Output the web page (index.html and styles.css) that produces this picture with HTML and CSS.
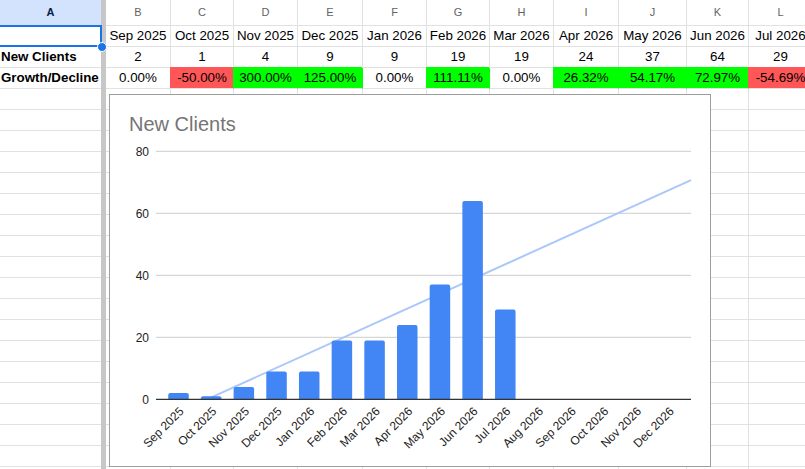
FILE: index.html
```html
<!DOCTYPE html>
<html>
<head>
<meta charset="utf-8">
<link rel="stylesheet" href="styles.css">
</head>
<body>
<div class="sheet">
  <div class="freeze"></div>

  <div class="c h sel">A</div><div class="c h">B</div><div class="c h">C</div><div class="c h">D</div><div class="c h">E</div><div class="c h">F</div><div class="c h">G</div><div class="c h">H</div><div class="c h">I</div><div class="c h">J</div><div class="c h">K</div><div class="c h">L</div>

  <div class="c a"></div><div class="c">Sep 2025</div><div class="c">Oct 2025</div><div class="c">Nov 2025</div><div class="c">Dec 2025</div><div class="c">Jan 2026</div><div class="c">Feb 2026</div><div class="c">Mar 2026</div><div class="c">Apr 2026</div><div class="c">May 2026</div><div class="c">Jun 2026</div><div class="c">Jul 2026</div>

  <div class="c a">New Clients</div><div class="c">2</div><div class="c">1</div><div class="c">4</div><div class="c">9</div><div class="c">9</div><div class="c">19</div><div class="c">19</div><div class="c">24</div><div class="c">37</div><div class="c">64</div><div class="c">29</div>

  <div class="c a">Growth/Decline</div><div class="c">0.00%</div><div class="c neg">-50.00%</div><div class="c pos">300.00%</div><div class="c pos">125.00%</div><div class="c">0.00%</div><div class="c pos">111.11%</div><div class="c">0.00%</div><div class="c pos">26.32%</div><div class="c pos">54.17%</div><div class="c pos">72.97%</div><div class="c neg">-54.69%</div>

  <div class="c a"></div><div class="c"></div><div class="c"></div><div class="c"></div><div class="c"></div><div class="c"></div><div class="c"></div><div class="c"></div><div class="c"></div><div class="c"></div><div class="c"></div><div class="c"></div>
  <div class="c a"></div><div class="c"></div><div class="c"></div><div class="c"></div><div class="c"></div><div class="c"></div><div class="c"></div><div class="c"></div><div class="c"></div><div class="c"></div><div class="c"></div><div class="c"></div>
  <div class="c a"></div><div class="c"></div><div class="c"></div><div class="c"></div><div class="c"></div><div class="c"></div><div class="c"></div><div class="c"></div><div class="c"></div><div class="c"></div><div class="c"></div><div class="c"></div>
  <div class="c a"></div><div class="c"></div><div class="c"></div><div class="c"></div><div class="c"></div><div class="c"></div><div class="c"></div><div class="c"></div><div class="c"></div><div class="c"></div><div class="c"></div><div class="c"></div>
  <div class="c a"></div><div class="c"></div><div class="c"></div><div class="c"></div><div class="c"></div><div class="c"></div><div class="c"></div><div class="c"></div><div class="c"></div><div class="c"></div><div class="c"></div><div class="c"></div>
  <div class="c a"></div><div class="c"></div><div class="c"></div><div class="c"></div><div class="c"></div><div class="c"></div><div class="c"></div><div class="c"></div><div class="c"></div><div class="c"></div><div class="c"></div><div class="c"></div>
  <div class="c a"></div><div class="c"></div><div class="c"></div><div class="c"></div><div class="c"></div><div class="c"></div><div class="c"></div><div class="c"></div><div class="c"></div><div class="c"></div><div class="c"></div><div class="c"></div>
  <div class="c a"></div><div class="c"></div><div class="c"></div><div class="c"></div><div class="c"></div><div class="c"></div><div class="c"></div><div class="c"></div><div class="c"></div><div class="c"></div><div class="c"></div><div class="c"></div>
  <div class="c a"></div><div class="c"></div><div class="c"></div><div class="c"></div><div class="c"></div><div class="c"></div><div class="c"></div><div class="c"></div><div class="c"></div><div class="c"></div><div class="c"></div><div class="c"></div>
  <div class="c a"></div><div class="c"></div><div class="c"></div><div class="c"></div><div class="c"></div><div class="c"></div><div class="c"></div><div class="c"></div><div class="c"></div><div class="c"></div><div class="c"></div><div class="c"></div>
  <div class="c a"></div><div class="c"></div><div class="c"></div><div class="c"></div><div class="c"></div><div class="c"></div><div class="c"></div><div class="c"></div><div class="c"></div><div class="c"></div><div class="c"></div><div class="c"></div>
  <div class="c a"></div><div class="c"></div><div class="c"></div><div class="c"></div><div class="c"></div><div class="c"></div><div class="c"></div><div class="c"></div><div class="c"></div><div class="c"></div><div class="c"></div><div class="c"></div>
  <div class="c a"></div><div class="c"></div><div class="c"></div><div class="c"></div><div class="c"></div><div class="c"></div><div class="c"></div><div class="c"></div><div class="c"></div><div class="c"></div><div class="c"></div><div class="c"></div>
  <div class="c a"></div><div class="c"></div><div class="c"></div><div class="c"></div><div class="c"></div><div class="c"></div><div class="c"></div><div class="c"></div><div class="c"></div><div class="c"></div><div class="c"></div><div class="c"></div>
  <div class="c a"></div><div class="c"></div><div class="c"></div><div class="c"></div><div class="c"></div><div class="c"></div><div class="c"></div><div class="c"></div><div class="c"></div><div class="c"></div><div class="c"></div><div class="c"></div>
  <div class="c a"></div><div class="c"></div><div class="c"></div><div class="c"></div><div class="c"></div><div class="c"></div><div class="c"></div><div class="c"></div><div class="c"></div><div class="c"></div><div class="c"></div><div class="c"></div>
  <div class="c a"></div><div class="c"></div><div class="c"></div><div class="c"></div><div class="c"></div><div class="c"></div><div class="c"></div><div class="c"></div><div class="c"></div><div class="c"></div><div class="c"></div><div class="c"></div>
  <div class="c a"></div><div class="c"></div><div class="c"></div><div class="c"></div><div class="c"></div><div class="c"></div><div class="c"></div><div class="c"></div><div class="c"></div><div class="c"></div><div class="c"></div><div class="c"></div>
  <div class="c a"></div><div class="c"></div><div class="c"></div><div class="c"></div><div class="c"></div><div class="c"></div><div class="c"></div><div class="c"></div><div class="c"></div><div class="c"></div><div class="c"></div><div class="c"></div>
</div>

<div class="selection"></div>
<div class="handle"></div>

<div class="chart">
  <svg class="chart-svg" width="600" height="371" viewBox="110 95 600 371" xmlns="http://www.w3.org/2000/svg">
    <text class="title" x="129" y="130.5">New Clients</text>

    <g class="grid">
      <line x1="156" y1="151.3" x2="691" y2="151.3"/>
      <line x1="156" y1="213.3" x2="691" y2="213.3"/>
      <line x1="156" y1="275.3" x2="691" y2="275.3"/>
      <line x1="156" y1="337.3" x2="691" y2="337.3"/>
    </g>

    <g class="ylab">
      <text x="149" y="155.6">80</text>
      <text x="149" y="217.6">60</text>
      <text x="149" y="279.6">40</text>
      <text x="149" y="341.6">20</text>
      <text x="149" y="403.6">0</text>
    </g>

    <line class="trend" x1="207" y1="399.3" x2="691" y2="180.2"/>

    <g class="bars">
      <path d="M168.25 399.3V395.1Q168.25 393.1 170.25 393.1H186.75Q188.75 393.1 188.75 395.1V399.3Z"/>
      <path d="M200.93 399.3V398.2Q200.93 396.2 202.93 396.2H219.43Q221.43 396.2 221.43 398.2V399.3Z"/>
      <path d="M233.61 399.3V388.9Q233.61 386.9 235.61 386.9H252.11Q254.11 386.9 254.11 388.9V399.3Z"/>
      <path d="M266.29 399.3V373.4Q266.29 371.4 268.29 371.4H284.79Q286.79 371.4 286.79 373.4V399.3Z"/>
      <path d="M298.97 399.3V373.4Q298.97 371.4 300.97 371.4H317.47Q319.47 371.4 319.47 373.4V399.3Z"/>
      <path d="M331.65 399.3V342.4Q331.65 340.4 333.65 340.4H350.15Q352.15 340.4 352.15 342.4V399.3Z"/>
      <path d="M364.33 399.3V342.4Q364.33 340.4 366.33 340.4H382.83Q384.83 340.4 384.83 342.4V399.3Z"/>
      <path d="M397.01 399.3V326.9Q397.01 324.9 399.01 324.9H415.51Q417.51 324.9 417.51 326.9V399.3Z"/>
      <path d="M429.69 399.3V286.6Q429.69 284.6 431.69 284.6H448.19Q450.19 284.6 450.19 286.6V399.3Z"/>
      <path d="M462.37 399.3V202.9Q462.37 200.9 464.37 200.9H480.87Q482.87 200.9 482.87 202.9V399.3Z"/>
      <path d="M495.05 399.3V311.4Q495.05 309.4 497.05 309.4H513.55Q515.55 309.4 515.55 311.4V399.3Z"/>
    </g>

    <line class="axis" x1="156" y1="399.3" x2="691" y2="399.3"/>

    <g class="xlab">
      <text transform="translate(184.5 412) rotate(-45)">Sep 2025</text>
      <text transform="translate(217.2 412) rotate(-45)">Oct 2025</text>
      <text transform="translate(249.9 412) rotate(-45)">Nov 2025</text>
      <text transform="translate(282.5 412) rotate(-45)">Dec 2025</text>
      <text transform="translate(315.2 412) rotate(-45)">Jan 2026</text>
      <text transform="translate(347.9 412) rotate(-45)">Feb 2026</text>
      <text transform="translate(380.6 412) rotate(-45)">Mar 2026</text>
      <text transform="translate(413.3 412) rotate(-45)">Apr 2026</text>
      <text transform="translate(445.9 412) rotate(-45)">May 2026</text>
      <text transform="translate(478.6 412) rotate(-45)">Jun 2026</text>
      <text transform="translate(511.3 412) rotate(-45)">Jul 2026</text>
      <text transform="translate(544.0 412) rotate(-45)">Aug 2026</text>
      <text transform="translate(576.7 412) rotate(-45)">Sep 2026</text>
      <text transform="translate(609.3 412) rotate(-45)">Oct 2026</text>
      <text transform="translate(642.0 412) rotate(-45)">Nov 2026</text>
      <text transform="translate(674.7 412) rotate(-45)">Dec 2026</text>
    </g>
  </svg>
</div>
</body>
</html>
```

FILE: styles.css
```css
html, body {
  margin: 0;
  padding: 0;
}

body {
  width: 805px;
  height: 469px;
  overflow: hidden;
  position: relative;
  background: #ffffff;
  font-family: "Liberation Sans", Arial, sans-serif;
  color: #000000;
}

.sheet {
  display: grid;
  grid-template-columns: 101px 5px 65px 63px 64px 65px 64px 63px 64px 65px 68px 62px 64px;
  grid-template-rows: 26px;
  grid-auto-rows: 21px;
  width: 813px;
}

.freeze {
  grid-column: 2;
  grid-row: 1 / span 23;
  background: #c7c7c7;
}

.c {
  box-sizing: border-box;
  border-right: 1px solid #e1e1e1;
  border-bottom: 1px solid #e1e1e1;
  display: flex;
  align-items: center;
  justify-content: center;
  font-size: 13.33px;
  white-space: nowrap;
  overflow: hidden;
  line-height: 1;
}

.a {
  grid-column: 1;
  justify-content: flex-start;
  padding-left: 1px;
  font-weight: bold;
  border-right: none;
}

.h {
  font-size: 11px;
  color: #5f6368;
  padding-bottom: 1px;
}

.h.sel {
  background: #d3e3fd;
  color: #041e49;
  font-weight: bold;
  border-right: none;
  border-bottom-color: #c2d4f5;
}

.neg {
  background: #ff5757;
  border-right-color: #ff5757;
  box-shadow: -1px -1px 0 0 #ff5757;
}

.pos {
  background: #00ff00;
  border-right-color: #00ff00;
  box-shadow: -1px -1px 0 0 #00ff00;
}

.selection {
  position: absolute;
  left: -2px;
  top: 25px;
  width: 104px;
  height: 22px;
  box-sizing: border-box;
  border: 2px solid #1a73e8;
}

.handle {
  position: absolute;
  left: 97px;
  top: 42px;
  width: 8px;
  height: 8px;
  border-radius: 50%;
  background: #1a73e8;
  border: 1px solid #ffffff;
}

.chart {
  position: absolute;
  left: 109px;
  top: 94px;
  width: 602px;
  height: 373px;
  box-sizing: border-box;
  border: 1px solid #9e9e9e;
  background: #ffffff;
}

.chart-svg {
  display: block;
  font-family: "Liberation Sans", Arial, sans-serif;
}

.title {
  font-size: 20px;
  fill: #757575;
}

.grid line {
  stroke: #cccccc;
  stroke-width: 1;
}

.ylab text {
  font-size: 12px;
  fill: #222222;
  text-anchor: end;
}

.xlab text {
  font-size: 12px;
  fill: #222222;
  text-anchor: end;
}

.trend {
  stroke: #aac8fb;
  stroke-width: 2;
}

.bars path {
  fill: #4285f4;
}

.axis {
  stroke: #333333;
  stroke-width: 1.3;
}
```
